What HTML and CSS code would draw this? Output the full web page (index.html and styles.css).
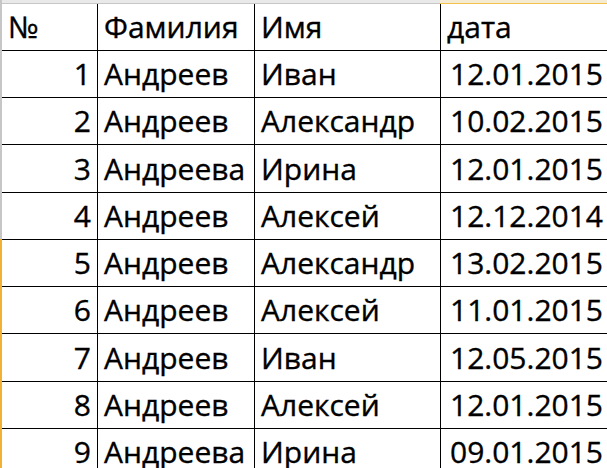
FILE: index.html
```html
<!DOCTYPE html>
<html lang="ru">
<head>
<meta charset="utf-8">
<title>Таблица</title>
<link rel="stylesheet" href="styles.css">
</head>
<body>
<div class="sheet">
  <div class="corner"></div>
  <div class="colhead">
    <div class="colhead-rest"></div>
    <div class="colhead-sel"></div>
  </div>
  <div class="rowhead">
    <div class="rowhead-rest"></div>
    <div class="rowhead-sel"></div>
  </div>
  <div class="grid">
    <div class="c">№</div><div class="c">Фамилия</div><div class="c">Имя</div><div class="c">дата</div>
    <div class="c num">1</div><div class="c">Андреев</div><div class="c">Иван</div><div class="c num date">12.01.2015</div>
    <div class="c num">2</div><div class="c">Андреев</div><div class="c">Александр</div><div class="c num date">10.02.2015</div>
    <div class="c num">3</div><div class="c">Андреева</div><div class="c">Ирина</div><div class="c num date">12.01.2015</div>
    <div class="c num">4</div><div class="c">Андреев</div><div class="c">Алексей</div><div class="c num date">12.12.2014</div>
    <div class="c num">5</div><div class="c">Андреев</div><div class="c">Александр</div><div class="c num date">13.02.2015</div>
    <div class="c num">6</div><div class="c">Андреев</div><div class="c">Алексей</div><div class="c num date">11.01.2015</div>
    <div class="c num">7</div><div class="c">Андреев</div><div class="c">Иван</div><div class="c num date">12.05.2015</div>
    <div class="c num">8</div><div class="c">Андреев</div><div class="c">Алексей</div><div class="c num date">12.01.2015</div>
    <div class="c num">9</div><div class="c">Андреева</div><div class="c">Ирина</div><div class="c num date">09.01.2015</div>
  </div>
</div>
</body>
</html>
```
FILE: styles.css
```css
html, body {
  margin: 0;
  padding: 0;
  background: #ffffff;
  overflow: hidden;
}

.sheet {
  display: grid;
  grid-template-columns: 2px auto;
  grid-template-rows: 4px auto;
  font-family: "Open Sans", "Liberation Sans", sans-serif;
  font-size: 30px;
  color: #000;
  -webkit-text-stroke: 0.35px #000;
}

.corner {
  background: #c6c6c6;
}

.colhead {
  display: flex;
  height: 4px;
}

.colhead-rest {
  width: 438px;
  background: #e9e9e9;
  border-bottom: 1px solid #c6c6c6;
  box-sizing: border-box;
}

.colhead-sel {
  flex: 1;
  background: #f4ebd2;
  border-bottom: 1px solid #f2c24c;
  box-sizing: border-box;
}

.rowhead {
  display: flex;
  flex-direction: column;
}

.rowhead-rest {
  height: 235px;
  background: #c6c6c6;
}

.rowhead-sel {
  flex: 1;
  background: #f2b035;
}

.grid {
  display: grid;
  grid-template-columns: 96px 157px 186px 172px;
  grid-template-rows: 47px 47px 47px 48px 47px 47px 47px 48px 47px 47px;
}

.c {
  box-sizing: border-box;
  border-right: 1px solid #000;
  border-bottom: 1px solid #000;
  display: flex;
  align-items: flex-end;
  padding: 0 6px 6px 6px;
  line-height: 34px;
  white-space: nowrap;
  overflow: hidden;
}

.num {
  justify-content: flex-end;
}

.date {
  padding-right: 9px;
}
```
